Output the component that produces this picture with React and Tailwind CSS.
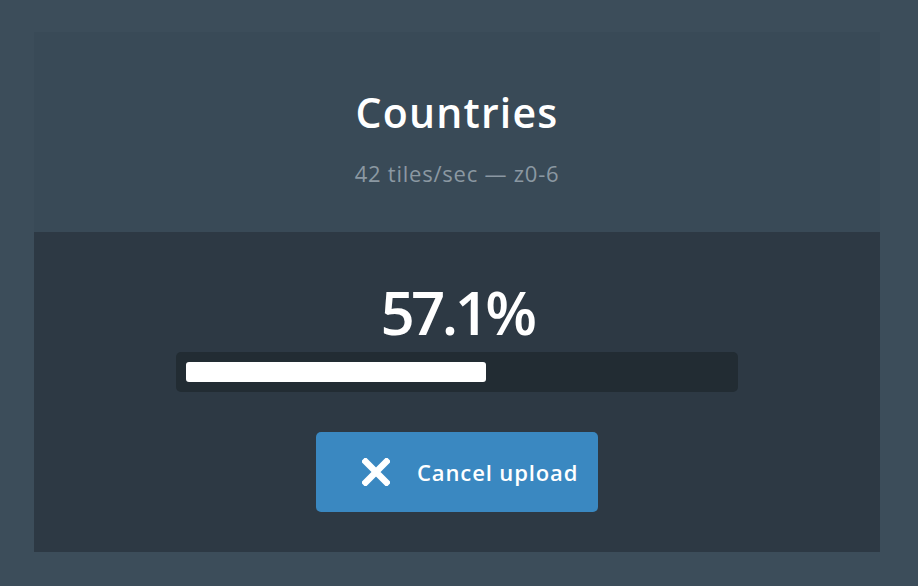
export default function App() {
  const font = { fontFamily: '"Open Sans", "Noto Sans", sans-serif' };
  return (
    <div className="min-h-[586px] w-full bg-[#3c4d5a] pt-[32px] pl-[34px] pb-[34px]" style={font}>
      <div className="flex flex-col w-[846px]">
        <div className="h-[200px] bg-[#394a57] flex flex-col items-center pt-[60px]">
          <div className="text-[41px] leading-[40px] font-semibold text-white tracking-[0.03em]">Countries</div>
          <div className="text-[22px] leading-[22px] text-[#8b98a2] mt-[30px] tracking-[0.035em]">42 tiles/sec — z0-6</div>
        </div>
        <div className="h-[320px] bg-[#2d3944] flex flex-col items-center">
          <div className="text-[60px] leading-[60px] font-semibold text-white mt-[50px] tracking-[-0.06em]">57.1%</div>
          <div className="w-[562px] h-[40px] bg-[#222c33] rounded-[5px] p-[10px] mt-[10px]">
            <div className="h-[20px] w-[300px] bg-white rounded-[3px]"></div>
          </div>
          <button className="mt-[40px] w-[282px] h-[80px] bg-[#3a88c1] rounded-[5px] flex items-center pl-[46px] text-white text-[22px] leading-[22px] font-semibold">
            <svg width="28" height="28" viewBox="0 0 28 28">
              <path d="M3.5 3.5 L24.5 24.5 M24.5 3.5 L3.5 24.5" stroke="white" strokeWidth="6.5" strokeLinecap="square" />
            </svg>
            <span className="ml-[27px] tracking-[0.04em]">Cancel upload</span>
          </button>
        </div>
      </div>
    </div>
  );
}
